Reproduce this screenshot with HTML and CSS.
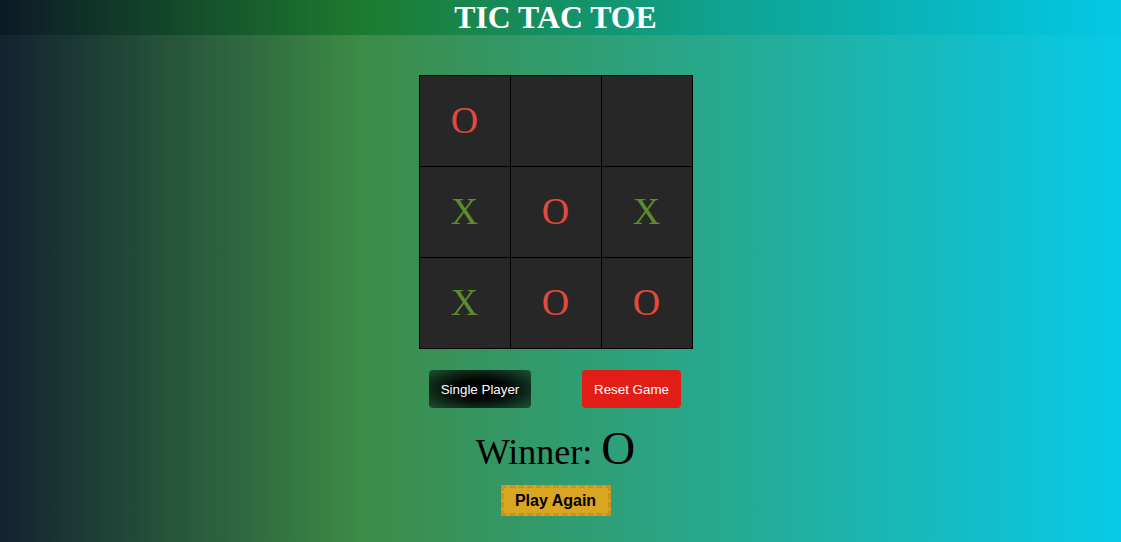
FILE: index.html
```html
<!DOCTYPE html>
<html>
<head>
<meta charset="utf-8">
<link rel="stylesheet" href="styles.css">
</head>
<body>
<header class="topbar"><h1 class="title">TIC TAC TOE</h1></header>
<main class="game">
  <div class="board">
    <div class="cell o">O</div>
    <div class="cell"></div>
    <div class="cell"></div>
    <div class="cell x">X</div>
    <div class="cell o">O</div>
    <div class="cell x">X</div>
    <div class="cell x">X</div>
    <div class="cell o">O</div>
    <div class="cell o">O</div>
  </div>
  <div class="controls">
    <button class="btn btn-mode">Single Player</button>
    <button class="btn btn-reset">Reset Game</button>
  </div>
  <div class="winner">Winner: <span class="winner-mark">O</span></div>
  <button class="btn-again">Play Again</button>
</main>
</body>
</html>
```
FILE: styles.css
```css
html, body {
  margin: 0;
  padding: 0;
  height: 100%;
}
body {
  font-family: "Liberation Serif", "Times New Roman", serif;
  background: linear-gradient(to right, #12222f 0%, #3d8b47 32%, #2aa585 60%, #08cae8 100%);
  overflow: hidden;
}
.topbar {
  height: 35px;
  padding-right: 10px;
  background: linear-gradient(to right, #0c1a25 0%, #1c7a2f 32%, #10a08a 62%, #03c8e6 100%);
  display: flex;
  justify-content: center;
  align-items: center;
}
.title {
  margin: 0;
  color: #fff;
  font-size: 31.8px;
  font-weight: bold;
  line-height: 35px;
}
.game {
  display: flex;
  flex-direction: column;
  align-items: center;
  padding-top: 40px;
  padding-right: 10px;
}
.board {
  display: grid;
  grid-template-columns: repeat(3, 90px);
  grid-template-rows: repeat(3, 90px);
  gap: 1px;
  padding: 1px;
  background: #000;
}
.cell {
  background: #272727;
  display: flex;
  align-items: center;
  justify-content: center;
  font-size: 38px;
  padding-bottom: 2px;
}
.cell.o { color: #e2493f; }
.cell.x { color: #5d8c2c; }
.controls {
  display: flex;
  gap: 51px;
  margin-top: 21px;
  margin-left: -1px;
}
.btn {
  font-family: "Liberation Sans", Arial, sans-serif;
  font-size: 13.33px;
  color: #fff;
  border: none;
  border-radius: 4px;
  height: 38px;
  padding: 0;
}
.btn-mode {
  width: 102px;
  background: radial-gradient(ellipse at center, rgba(0,0,0,0.98) 35%, rgba(0,0,0,0.45) 100%);
}
.btn-reset {
  width: 99px;
  background: #e21d17;
}
.winner {
  margin-top: 16px;
  font-size: 36px;
  line-height: 48px;
  color: #000;
}
.winner-mark {
  font-size: 47px;
}
.btn-again {
  margin-top: 9px;
  width: 110px;
  height: 31px;
  background: #daa520;
  border: 3px dashed #c8941c;
  font-family: "Liberation Sans", Arial, sans-serif;
  font-weight: bold;
  font-size: 16px;
  color: #000;
  padding: 0;
}
```
